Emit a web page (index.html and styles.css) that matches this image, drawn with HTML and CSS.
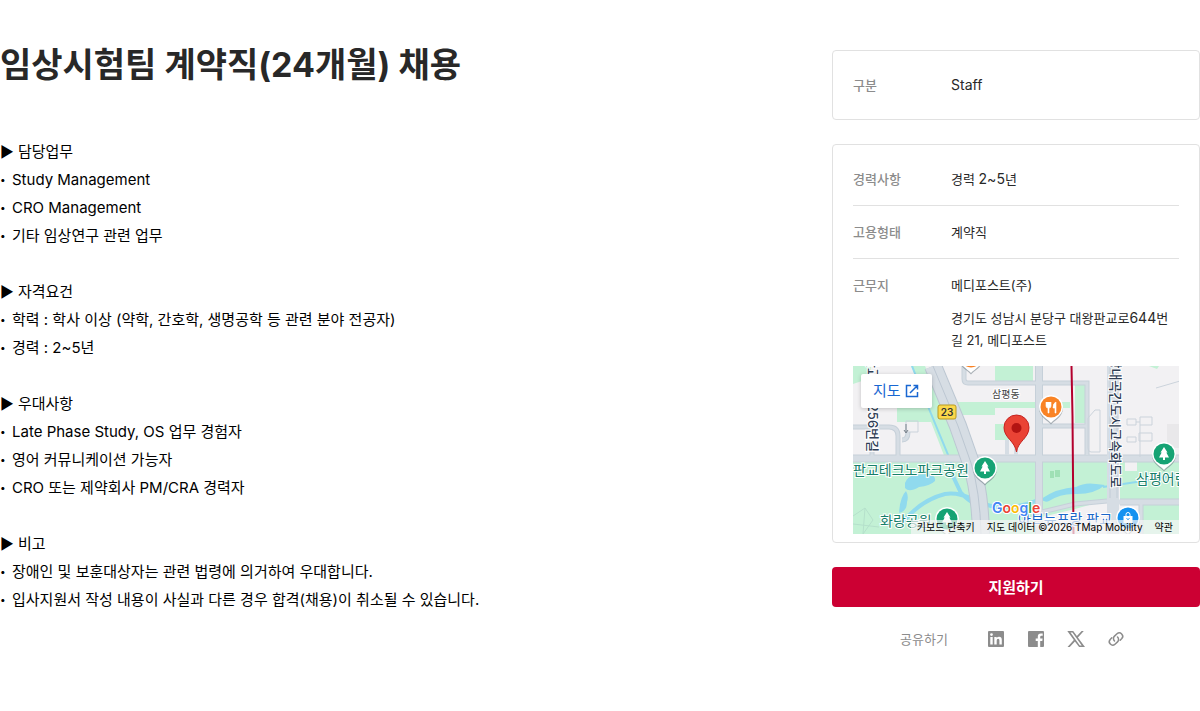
FILE: index.html
```
<!DOCTYPE html>
<html lang="ko">
  <head>
    <meta charset="UTF-8" />
    <meta name="viewport" content="width=device-width, initial-scale=1.0" />
    <title>임상시험팀 계약직(24개월) 채용</title>
    <link rel="stylesheet" href="styles.css" />
  </head>
  <body>
    <div class="page">
      <main class="posting">
        <h1>임상시험팀 계약직(24개월) 채용</h1>

        <section>
          <h2>▶ 담당업무</h2>
          <ul>
            <li>Study Management</li>
            <li>CRO Management</li>
            <li>기타 임상연구 관련 업무</li>
          </ul>
        </section>

        <section>
          <h2>▶ 자격요건</h2>
          <ul>
            <li>학력 : 학사 이상 (약학, 간호학, 생명공학 등 관련 분야 전공자)</li>
            <li>경력 : 2~5년</li>
          </ul>
        </section>

        <section>
          <h2>▶ 우대사항</h2>
          <ul>
            <li>Late Phase Study, OS 업무 경험자</li>
            <li>영어 커뮤니케이션 가능자</li>
            <li>CRO 또는 제약회사 PM/CRA 경력자</li>
          </ul>
        </section>

        <section>
          <h2>▶ 비고</h2>
          <ul>
            <li>장애인 및 보훈대상자는 관련 법령에 의거하여 우대합니다.</li>
            <li>입사지원서 작성 내용이 사실과 다른 경우 합격(채용)이 취소될 수 있습니다.</li>
          </ul>
        </section>
      </main>

      <aside class="sidebar">
        <dl class="card">
          <div class="row">
            <dt>구분</dt>
            <dd><span class="latin">Staff</span></dd>
          </div>
        </dl>

        <div class="card">
          <dl>
            <div class="row">
              <dt>경력사항</dt>
              <dd>경력 <span class="latin">2~5</span>년</dd>
            </div>
            <div class="row">
              <dt>고용형태</dt>
              <dd>계약직</dd>
            </div>
            <div class="row">
              <dt>근무지</dt>
              <dd>
                메디포스트(주)
                <p class="address">경기도 성남시 분당구 대왕판교로<span class="latin">644</span>번길 21, 메디포스트</p>
              </dd>
            </div>
          </dl>

          <div class="map">
            <svg class="map-canvas" viewBox="0 0 326 168" preserveAspectRatio="xMidYMid slice" role="img" aria-label="메디포스트 위치">
              <defs>
                <g id="pin">
                  <path d="M0 16.500C-2.500 13-12 9.500-12 0a12 12 0 0 1 24 0C12 9.500 2.500 13 0 16.500z" fill="#5f6f7a" opacity=".5" transform="translate(0 1)" />
                  <path d="M0 16C-2.500 12.500-12 9-12 0a12 12 0 0 1 24 0C12 9 2.500 12.500 0 16z" fill="#fff" />
                  <circle r="10.500" />
                </g>
                <path id="tree" d="M0-7 3.500-1.500H2.300L5 3.500H1V6h-2V3.500h-4L-2.300-1.500h-1.200z" fill="#fff" />
              </defs>

              <rect width="326" height="168" fill="#f2f1f3" />

              <!-- parks -->
              <g fill="#c3f1d5">
                <path d="M0 0h18v12L0 18zM58 0h14l44 92H92L78 56H44V42h33z" />
                <path d="M142 0h38v15h-38zM98 36h119v6h-75v7h-40zM142 58h30v16h-30zM222 19h10v38h-10zM296 0h10l-2 3z" />
                <path d="M0 96h182v72H0zM189 96h65v38l-32 9-33 8zM267 96h59v38h-59zM289 139h37v29h-37z" />
              </g>
              <path d="M197 105h4v7h-4zM202 104h5v7h-5z" fill="#9fe0b5" />
              <path d="M272 95h12v10h-12z" fill="#f2f1f3" />
              <path d="M314 58h12v24h-12z" fill="#e9e8ea" />
              <path d="M0 150l12-8 8 12-10 14M12 142l-2 26M0 158l26 3" fill="none" stroke="#b5e0cb" />

              <!-- water -->
              <g fill="#90daee">
                <path d="M52 117q2-6 9-8l14-1q8 1 7 7-5 5-16 6-10 6-14 1zM46 147q1-16 7-22 3 5 1 11 0 9-8 11z" />
                <path d="M188 133q16-11 35-12 9-5 20-3l9 1q-10 9-28 9-16-1-28 7-4 2-8-2z" />
              </g>
              <path d="M50 156q18-22 42-28c20-3 32 10 50 13q24 2 48-9M98 106l10 21q8 8 13 10" fill="none" stroke="#90daee" stroke-width="4" />
              <path d="M59 0 74 38l22 53 5 14M250 121l40-6 36-6" fill="none" stroke="#90daee" stroke-width="2" />

              <!-- roads -->
              <g fill="none" stroke="#c6d0d9">
                <path d="M0 61h36q9 0 9 9v22M19 86v6M49 74q6 0 6-8M111 0v13q0 4 4 4h119v72M189 60h45M189 146l33-8 32-3M288 138v30" stroke-width="5" />
                <path d="M0 92.500h326M186 0v168" stroke-width="8" />
                <path d="M260 0v168M267 136h59" stroke-width="7" />
              </g>
              <g fill="none" stroke="#d6dde4">
                <path d="M0 61h36q9 0 9 9v22M19 86v6M49 74q6 0 6-8M111 0v13q0 4 4 4h119v72M189 60h45M189 146l33-8 32-3M288 138v30" stroke-width="3" />
                <path d="M0 92.500h326M186 0v168" stroke-width="6" />
                <path d="M260 0v168" stroke-width="12" />
                <path d="M255 136h71" stroke-width="5" />
              </g>
              <path d="M154 74v15M163 78v11" stroke="#d6dde4" stroke-width="4" />
              <path d="M80 0 105 60 118 97q9 28 10 71" fill="none" stroke="#bcc7d2" stroke-width="18" />
              <path d="M80 0 105 60 118 97q9 28 10 71" fill="none" stroke="#d6dde4" stroke-width="16" />
              <path d="M80 0 105 60 118 97q9 28 10 71" fill="none" stroke="#bcc7d2" />
              <path d="M257 0v132M264 0v132" stroke="#c2ccd6" />
              <g fill="none" stroke="#cbd3db">
                <path d="M235 52l7-8h5v42h-9q-3 0-3-4zM274 53h9v6h-9zM287 51h12v8h-12zM274 71h9v5h-9zM286 67h13v8h-13zM283 56h4M287 59v32M53 55h12v11H53zM303 22l24-7" />
              </g>
              <path d="M53 58v8M51 64l2 3 2-3" fill="none" stroke="#77808a" />
              <path d="M218.500 0 219.500 50l1 118" fill="none" stroke="#b3002d" stroke-width="2" />

              <!-- place names -->
              <g class="road-name">
                <text transform="translate(15 86) rotate(90)" text-anchor="end">판교역로256번길</text>
                <text transform="translate(258 122) rotate(90)" text-anchor="end">분당내곡간도시고속화도로</text>
              </g>
              <text class="district" x="139" y="32">삼평동</text>
              <g class="place">
                <text x="0" y="109">판교테크노파크공원</text>
                <text x="27" y="160">화랑공원</text>
                <text x="283" y="118">삼평어린이공원</text>
                <text class="shop" x="165" y="158">아브뉴프랑 판교</text>
              </g>
              <rect x="85" y="39" width="18" height="14" rx="2" fill="#fbd84a" stroke="#b79a24" />
              <text class="route" x="94" y="50" text-anchor="middle">23</text>

              <!-- pins -->
              <use href="#pin" x="118" y="-9" fill="#f98325" />
              <use href="#pin" x="198" y="41" fill="#f98325" />
              <path d="M193 36v4q0 2 2 2v5h1v-5q2 0 2-2v-4M195.500 36v5M203 36q-3 1-3 6h2v5h1z" fill="#fff" stroke="#fff" stroke-width=".6" />
              <g fill="#16a374">
                <use href="#pin" x="132" y="102" />
                <use href="#pin" x="311" y="88" />
                <use href="#pin" x="94" y="153" />
              </g>
              <use href="#tree" x="132" y="102" />
              <use href="#tree" x="311" y="88" />
              <use href="#tree" x="94" y="153" />
              <use href="#pin" x="275" y="152" fill="#1492f0" />
              <path d="M270.500 150h9v7h-9z" fill="#fff" />
              <path d="M273 150v-1.500a2 2 0 0 1 4 0v1.500" fill="none" stroke="#fff" />
              <path d="M273.500 152.500q1.500 2 3 0" fill="none" stroke="#1492f0" />
              <path d="M163.500 86C162 75 151 72 151 61.500a12.500 12.500 0 0 1 25 0C176 72 165 75 163.500 86z" fill="#ea4335" stroke="#c5221f" />
              <circle cx="163.500" cy="62" r="5" fill="#b31412" />

              <text class="google" x="139" y="147"><tspan fill="#4285f4">G</tspan><tspan fill="#ea4335">o</tspan><tspan fill="#fbbc04">o</tspan><tspan fill="#4285f4">g</tspan><tspan fill="#34a853">l</tspan><tspan fill="#ea4335">e</tspan></text>
            </svg>

            <a class="map-link" href="#">
              지도
              <svg width="16" height="16" viewBox="0 0 16 16" fill="none" stroke="currentColor" stroke-width="1.500" aria-hidden="true">
                <path d="M7 2.500H2.500v11h11V9M9.500 2.500h4v4M13.500 2.500 6 10" />
              </svg>
            </a>
            <div class="map-terms">
              <button type="button">키보드 단축키</button>
              <span>지도 데이터 ©2026 TMap Mobility</span>
              <a href="#">약관</a>
            </div>
          </div>
        </div>

        <button type="button" class="apply">지원하기</button>

        <div class="share">
          <span class="share-label">공유하기</span>
          <div class="share-links">
            <a href="#" aria-label="LinkedIn">
              <svg viewBox="0 0 24 24" fill="currentColor"><path fill-rule="evenodd" d="M5 4h14a1 1 0 0 1 1 1v14a1 1 0 0 1-1 1H5a1 1 0 0 1-1-1V5a1 1 0 0 1 1-1zM6.300 10v7.500h2.400V10zM7.500 6.200a1.400 1.400 0 1 0 0 2.800 1.400 1.400 0 0 0 0-2.800zM10.300 10v7.500h2.400v-4q0-1.700 1.400-1.700t1.300 1.700v4h2.400V13q0-3.200-2.700-3.200-1.700 0-2.400 1.200V10z" /></svg>
            </a>
            <a href="#" aria-label="Facebook">
              <svg viewBox="0 0 24 24" fill="currentColor"><path d="M5 4h14a1 1 0 0 1 1 1v14a1 1 0 0 1-1 1h-2.800v-6h2.100l.3-2.500h-2.400V10q0-1.200 1.200-1.200h1.300V6.600q-.8-.1-1.800-.1-3.100 0-3.100 3.200v1.800h-2.100V14h2.100v6H5a1 1 0 0 1-1-1V5a1 1 0 0 1 1-1z" /></svg>
            </a>
            <a href="#" aria-label="X">
              <svg viewBox="0 0 24 24" fill="currentColor"><path fill-rule="evenodd" d="M3.300 4h5.900l3.700 5L17.600 4h2.200l-5.900 6.500L21 20h-5.900l-4.200-5.600L5.800 20H3.500l6.300-7.100zM6.500 5.500l9.300 12.900h1.900L8.400 5.500z" /></svg>
            </a>
            <a href="#" aria-label="링크 복사">
              <svg viewBox="0 0 24 24" fill="none" stroke="currentColor" stroke-width="1.500" stroke-linecap="round"><path d="M10.500 14a3.400 3.400 0 0 1 0-4.900l2.500-2.300a3.400 3.400 0 0 1 4.800 4.800L16.200 13.200M13.500 10a3.400 3.400 0 0 1 0 4.900L11 17.200a3.400 3.400 0 0 1-4.800-4.800L7.800 10.800" /></svg>
            </a>
          </div>
        </div>
      </aside>
    </div>
  </body>
</html>
```
FILE: styles.css
```
:root {
  --text: #282828;
  --muted: #8c8c8c;
  --border: #e1e1e1;
  --accent: #cc0033;
}

* {
  box-sizing: border-box;
  margin: 0;
  padding: 0;
}

body {
  background: #fff;
  color: #000;
  font-family: Inter, "Noto Sans CJK KR", sans-serif;
  font-size: 15px;
  line-height: 28px;
}

.page {
  display: flex;
  align-items: flex-start;
  gap: 40px;
}

.posting {
  flex: 1;
  padding: 40px 0;
}

h1 {
  margin-bottom: 49px;
  color: var(--text);
  font-size: 34px;
  font-weight: 700;
  line-height: 49px;
}

h2 {
  font-size: 15px;
  font-weight: 400;
}

section + section {
  margin-top: 28px;
}

ul {
  list-style: none;
}

li::before {
  content: "•";
  display: inline-block;
  width: 12px;
  font-size: 10px;
  line-height: 20px;
  vertical-align: 2px;
}

.sidebar {
  width: 368px;
  padding: 50px 0;
}

.card {
  margin-bottom: 24px;
  padding: 8px 20px;
  border: 1px solid var(--border);
  border-radius: 4px;
  color: var(--text);
  font-size: 13px;
  line-height: 22px;
}

.latin {
  font-size: 14px;
}

.row {
  display: flex;
  padding: 15px 0;
}

.row + .row {
  border-top: 1px solid var(--border);
}

dt {
  width: 98px;
  color: var(--muted);
  font-weight: 500;
}

dd {
  flex: 1;
}

.address {
  margin-top: 11px;
  word-break: break-all;
}

.map {
  position: relative;
  height: 168px;
  overflow: hidden;
}

.map-canvas {
  display: block;
  width: 100%;
  height: 100%;
}

.map-canvas text {
  paint-order: stroke;
  stroke: #fff;
  stroke-width: 2px;
}

.road-name {
  fill: #2f3e55;
  font-size: 13px;
  font-weight: 500;
}

.district {
  fill: #444;
  font-size: 10px;
}

.place {
  fill: #16806a;
  font-size: 14px;
}

.shop {
  fill: #1a67c9;
}

.map-canvas .route {
  fill: #333;
  font-size: 10px;
  font-weight: 600;
  stroke: none;
}

.google {
  font-size: 14px;
  font-weight: 600;
}

.map-link {
  position: absolute;
  top: 8px;
  left: 8px;
  display: flex;
  align-items: center;
  gap: 3px;
  height: 34px;
  padding: 0 12px;
  border-radius: 2px;
  background: #fff;
  box-shadow: 0 1px 4px rgba(0, 0, 0, 0.2);
  color: #1967d2;
  font-size: 15px;
  text-decoration: none;
}

.map-terms {
  position: absolute;
  right: 0;
  bottom: 0;
  display: flex;
  gap: 12px;
  padding: 0 6px;
  background: rgba(245, 245, 245, 0.7);
  color: #000;
  font-size: 10px;
  line-height: 14px;
  white-space: nowrap;
}

.map-terms button,
.map-terms a {
  border: none;
  background: none;
  color: inherit;
  font: inherit;
  text-decoration: none;
}

.apply {
  display: block;
  width: 100%;
  height: 40px;
  padding-bottom: 2px;
  border: none;
  border-radius: 4px;
  background: var(--accent);
  color: #fff;
  font-family: inherit;
  font-size: 15px;
  font-weight: 700;
  cursor: pointer;
}

.share {
  display: flex;
  justify-content: center;
  align-items: center;
  gap: 36px;
  margin-top: 20px;
  padding-right: 4px;
  color: var(--muted);
}

.share-label {
  font-size: 13px;
  line-height: 24px;
}

.share-links {
  display: flex;
  gap: 16px;
}

.share-links a {
  width: 24px;
  height: 24px;
  color: inherit;
}

.share-links svg {
  display: block;
}

@media screen and (max-width: 800px) {
  .page {
    flex-direction: column;
    padding: 0 16px;
  }

  .sidebar {
    width: 100%;
    padding-top: 0;
  }
}
```
